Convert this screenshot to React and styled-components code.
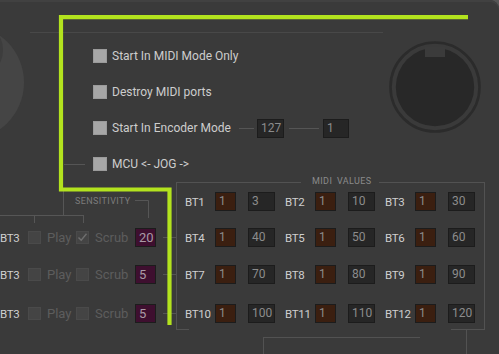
import React from 'react';
import styled, { createGlobalStyle } from 'styled-components';

const Global = createGlobalStyle`
  html, body { margin: 0; padding: 0; background: #565656; }
  body { font-family: Roboto, "Noto Sans", sans-serif; }
`;

const Window = styled.div`
  position: relative;
  width: 499px;
  height: 354px;
  overflow: hidden;
  background: #3a3a3a;
  box-shadow: inset 0 2px 0 #414141;
  border-top-right-radius: 9px;
`;

const Top = styled.div`
  display: flex;
  align-items: flex-start;
  height: 182px;
`;

const Knob = styled.svg`
  flex-shrink: 0;
  margin-left: -96px;
  margin-top: 24px;
`;

const Main = styled.div`
  width: 353px;
  margin-left: 6px;
  flex-shrink: 0;
`;

const Rule = styled.div`
  margin-top: 32px;
  height: 1px;
  background: #484848;
`;

const Options = styled.div`
  margin-top: 5px;
  padding-left: 63px;
`;

const OptionRow = styled.div`
  display: flex;
  align-items: center;
  height: 36px;
`;

const Lead = styled.span`
  width: 21px;
  height: 1px;
  margin-left: -29px;
  margin-right: 8px;
  background: #555;
`;

const Check = styled.span`
  box-sizing: border-box;
  width: 14px;
  height: 14px;
  background: #a7a7a7;
  border: 1px solid #9b9b9b;
  flex-shrink: 0;
`;

const OptionLabel = styled.span`
  margin-left: 5px;
  font-size: 12px;
  color: #cdcdcd;
  white-space: nowrap;
  ${p => p.$width && `width: ${p.$width}px;`}
`;

const Link = styled.span`
  height: 1px;
  background: #555;
  width: ${p => p.$w}px;
  margin-left: ${p => p.$ml || 0}px;
  margin-right: ${p => p.$mr || 0}px;
`;

const ValueBox = styled.span`
  box-sizing: border-box;
  height: 19px;
  width: ${p => p.$w || 27}px;
  padding-left: 3px;
  background: ${p => p.$tone === 'brown' ? '#3b1f10' : p.$tone === 'plum' ? '#3e0f2f' : '#262626'};
  border: 1px solid #1c1c1c;
  color: ${p => p.$tone === 'plum' ? '#a99aa6' : '#8c8c8c'};
  font-size: ${p => p.$tone === 'plum' ? 13 : 12}px;
  line-height: 17px;
  flex-shrink: 0;
`;

const Jog = styled.svg`
  flex-shrink: 0;
  margin-left: 5px;
  margin-top: 40px;
`;

const Bottom = styled.div`
  display: flex;
  align-items: flex-start;
`;

const Sens = styled.div`
  width: 176px;
  flex-shrink: 0;
`;

const SensHead = styled.div`
  display: grid;
  height: 46px;
  & > * { grid-area: 1 / 1; }
`;

const Caption = styled.span`
  font-size: 9px;
  line-height: 10px;
  letter-spacing: 0.4px;
  color: #7c7c7c;
  text-transform: uppercase;
`;

const SensCaption = styled(Caption)`
  margin-left: 75px;
  margin-top: 14px;
`;

const SensRow = styled.div`
  display: flex;
  align-items: center;
  height: 19px;
  margin-top: ${p => p.$mt}px;
`;

const BtLabel = styled.span`
  width: ${p => p.$w}px;
  font-size: 11.5px;
  letter-spacing: -0.3px;
  color: #cfcfcf;
  flex-shrink: 0;
  white-space: nowrap;
`;

const DimCheck = styled.span`
  box-sizing: border-box;
  width: 13px;
  height: 13px;
  background: #444;
  border: 1px solid #4a4a4a;
  display: flex;
  align-items: center;
  justify-content: center;
  flex-shrink: 0;
`;

const DimLabel = styled.span`
  width: ${p => p.$w}px;
  margin-left: 6px;
  font-size: 13px;
  color: #5d5d5d;
  flex-shrink: 0;
`;

const Tick = styled.span`
  flex: 1;
  height: 1px;
  margin-left: 7px;
  background: #555;
`;

const MidiCol = styled.div`
  display: flex;
  flex-direction: column;
`;

const MidiFrame = styled.div`
  position: relative;
  box-sizing: border-box;
  width: 309px;
  height: 148px;
  padding: 9px 0 0 8px;
  border: 1px solid #525252;
  border-bottom: none;

  &::before, &::after {
    content: '';
    position: absolute;
    bottom: 0;
    height: 1px;
    background: #525252;
  }
  &::before { left: 0; width: 12px; }
  &::after { right: 0; width: 33px; }
`;

const Legend = styled(Caption)`
  position: absolute;
  top: -7px;
  left: 124px;
  padding: 0 8px 0 11px;
  background: #3a3a3a;
  color: #8a8a8a;
  word-spacing: 2px;
`;

const MidiRow = styled.div`
  display: flex;
  align-items: center;
  height: 19px;
  margin-top: ${p => p.$mt}px;
`;

const Group = styled.div`
  display: flex;
  align-items: center;
  width: 100px;
  flex-shrink: 0;
`;

const Below = styled.div`
  display: flex;
  align-items: flex-start;
`;

const McuBox = styled.div`
  box-sizing: border-box;
  width: 157px;
  height: 30px;
  margin-left: 87px;
  margin-top: 7px;
  padding: 9px 0 0 16px;
  border-top: 1px solid #525252;
  border-left: 1px solid #525252;
  text-align: center;
`;

const Drop = styled.span`
  width: 1px;
  height: 30px;
  margin-left: 46px;
  background: #525252;
`;

const Highlight = styled.svg`
  position: absolute;
  left: 0;
  top: 0;
  pointer-events: none;
`;

const options = [
  { label: 'Start In MIDI Mode Only' },
  { label: 'Destroy MIDI ports' },
  { label: 'Start In Encoder Mode', encoder: true },
  { label: 'MCU <- JOG ->', lead: true },
];

const sensRows = [
  { value: 20, scrub: true, mt: 0 },
  { value: 5, scrub: false, mt: 18 },
  { value: 5, scrub: false, mt: 20 },
];

const midiRows = [
  { mt: 0, items: [[1, 3], [2, 10], [3, 30]] },
  { mt: 17, items: [[4, 40], [5, 50], [6, 60]] },
  { mt: 18, items: [[7, 70], [8, 80], [9, 90]] },
  { mt: 20, items: [[10, 100], [11, 110], [12, 120]] },
];

const CheckMark = () => (
  <svg width="11" height="11" viewBox="0 0 11 11">
    <polyline points="1.5,5.5 4.2,8.3 9.5,1.8" fill="none" stroke="#6e6e6e" strokeWidth="1.4" />
  </svg>
);

export default function App() {
  return (
    <>
      <Global />
      <Window>
        <Top>
          <Knob width="120" height="120" viewBox="0 0 120 120">
            <circle cx="62.5" cy="58.5" r="57.5" fill="#454545" />
            <circle cx="69" cy="26" r="30" fill="#3d3d3d" />
          </Knob>
          <Main>
            <Rule />
            <Options>
              {options.map(o => (
                <OptionRow key={o.label}>
                  {o.lead && <Lead />}
                  <Check />
                  <OptionLabel $width={o.encoder ? 127 : undefined}>{o.label}</OptionLabel>
                  {o.encoder && (
                    <>
                      <Link $w={15} $mr={3} />
                      <ValueBox>127</ValueBox>
                      <Link $w={30} $ml={5} $mr={4} />
                      <ValueBox $w={26}>1</ValueBox>
                    </>
                  )}
                </OptionRow>
              ))}
            </Options>
          </Main>
          <Jog width="94" height="94" viewBox="0 0 94 94">
            <circle cx="47" cy="47" r="44.5" fill="none" stroke="#2b2b2b" strokeWidth="2.6" />
            <circle cx="47" cy="47" r="39.2" fill="#282828" />
            <rect x="37" y="7" width="20" height="10" fill="#3b3b3b" />
          </Jog>
        </Top>

        <Bottom>
          <Sens>
            <SensHead>
              <svg width="176" height="46" viewBox="0 0 176 46">
                <g stroke="#565656" strokeWidth="1" fill="none">
                  <line x1="63.5" y1="6" x2="63.5" y2="33.5" />
                  <line x1="0" y1="33.5" x2="84" y2="33.5" />
                  <line x1="34.5" y1="33.5" x2="34.5" y2="41" />
                  <line x1="83.5" y1="33.5" x2="83.5" y2="41" />
                  <polyline points="135,18.5 148.5,18.5 148.5,36" />
                </g>
              </svg>
              <SensCaption>Sensitivity</SensCaption>
            </SensHead>
            {sensRows.map((r, i) => (
              <SensRow key={i} $mt={r.mt}>
                <BtLabel $w={28}>BT3</BtLabel>
                <DimCheck />
                <DimLabel $w={29}>Play</DimLabel>
                <DimCheck>{r.scrub && <CheckMark />}</DimCheck>
                <DimLabel $w={40}>Scrub</DimLabel>
                <ValueBox $w={21} $tone="plum">{r.value}</ValueBox>
                <Tick />
              </SensRow>
            ))}
          </Sens>

          <MidiCol>
            <MidiFrame>
              <Legend>MIDI VALUES</Legend>
              {midiRows.map((row, i) => (
                <MidiRow key={i} $mt={row.mt}>
                  {row.items.map(([n, v]) => (
                    <Group key={n}>
                      <BtLabel $w={30}>BT{n}</BtLabel>
                      <ValueBox $w={21} $tone="brown">1</ValueBox>
                      <Link $w={0} $ml={12} />
                      <ValueBox $w={27}>{v}</ValueBox>
                    </Group>
                  ))}
                </MidiRow>
              ))}
            </MidiFrame>
            <Below>
              <McuBox>
                <Caption>MCU PLAY / STOP</Caption>
              </McuBox>
              <Drop />
            </Below>
          </MidiCol>
        </Bottom>

        <Highlight width="499" height="354" viewBox="0 0 499 354">
          <polyline
            points="468,17.2 61,17.2 61,189.5 169.5,189.5 169.5,325"
            fill="none"
            stroke="#b3e31e"
            strokeWidth="4.2"
          />
        </Highlight>
      </Window>
    </>
  );
}
